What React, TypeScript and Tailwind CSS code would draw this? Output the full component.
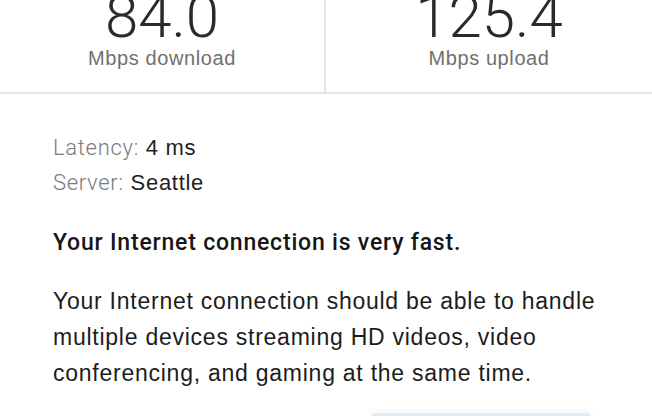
const stats = [
  { value: '84.0', label: 'Mbps download' },
  { value: '125.4', label: 'Mbps upload' },
];

export default function App() {
  return (
    <div className="w-[652px] h-[416px] overflow-hidden bg-white font-['Liberation_Sans',Arial,sans-serif]">
      {/* speed results */}
      <div className="grid grid-cols-2 h-[94px] border-b-2 border-[#e4e4e4]">
        {stats.map((s, i) => (
          <div
            key={s.label}
            className={`flex flex-col items-center ${i === 0 ? 'border-r-2 border-[#e4e4e4]' : ''}`}
          >
            <div className="mt-[-13px] h-[59px] font-['Roboto',sans-serif] font-light text-[60px] leading-[59px] text-[#2a2a2a]">
              {s.value}
            </div>
            <div className="text-[20px] leading-[24px] tracking-[0.6px] text-[#707070]">{s.label}</div>
          </div>
        ))}
      </div>

      <div className="pl-[53px] pt-[36px]">
        <div className="text-[22px] leading-[35px] tracking-[0.7px]">
          <div>
            <span className="font-['Roboto',sans-serif] font-light text-[#7a7a7a]">Latency:</span>{' '}
            <span className="text-[#1f1f1f]">4 ms</span>
          </div>
          <div>
            <span className="font-['Roboto',sans-serif] font-light text-[#7a7a7a]">Server:</span>{' '}
            <span className="text-[#1f1f1f]">Seattle</span>
          </div>
        </div>

        <div className="mt-[28px] font-['Roboto',sans-serif] font-medium text-[23px] leading-[30px] tracking-[0.8px] text-[#161616]">
          Your Internet connection is very fast.
        </div>

        <p className="mt-[25px] w-[580px] text-[23px] leading-[36px] tracking-[0.75px] text-[#1c1c1c]">
          Your Internet connection should be able to handle multiple devices streaming HD videos, video
          conferencing, and gaming at the same time.
        </p>

        {/* button peeking in at the bottom */}
        <div className="ml-[317px] mt-[22px] w-[222px] h-[40px] rounded-[6px] bg-[#dcedf9] shadow-[0_-2px_6px_rgba(0,0,0,0.04)]" />
      </div>
    </div>
  );
}
